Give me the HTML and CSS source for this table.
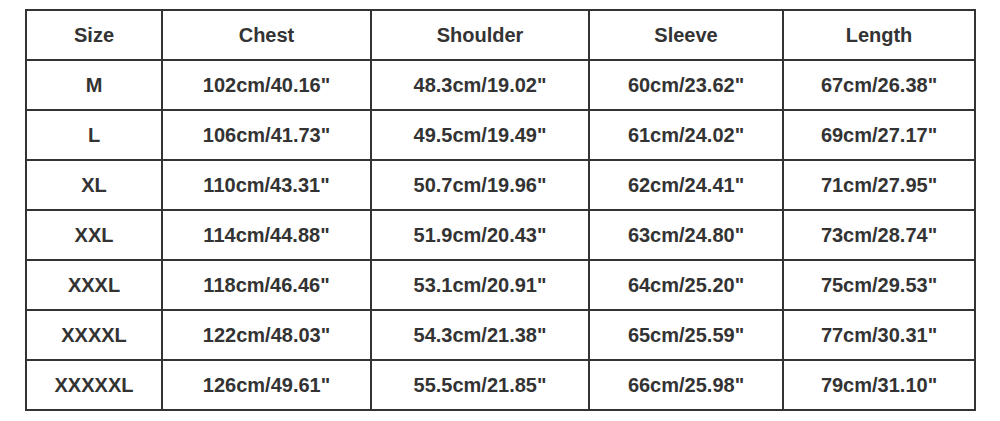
FILE: index.html
```html
<!DOCTYPE html>
<html>
<head>
<meta charset="utf-8">
<link rel="stylesheet" href="styles.css">
</head>
<body>
<table class="size-table">
<colgroup>
<col class="c1"><col class="c2"><col class="c3"><col class="c4"><col class="c5">
</colgroup>
<thead>
<tr><th>Size</th><th>Chest</th><th>Shoulder</th><th>Sleeve</th><th>Length</th></tr>
</thead>
<tbody>
<tr><td>M</td><td>102cm/40.16"</td><td>48.3cm/19.02"</td><td>60cm/23.62"</td><td>67cm/26.38"</td></tr>
<tr><td>L</td><td>106cm/41.73"</td><td>49.5cm/19.49"</td><td>61cm/24.02"</td><td>69cm/27.17"</td></tr>
<tr><td>XL</td><td>110cm/43.31"</td><td>50.7cm/19.96"</td><td>62cm/24.41"</td><td>71cm/27.95"</td></tr>
<tr><td>XXL</td><td>114cm/44.88"</td><td>51.9cm/20.43"</td><td>63cm/24.80"</td><td>73cm/28.74"</td></tr>
<tr><td>XXXL</td><td>118cm/46.46"</td><td>53.1cm/20.91"</td><td>64cm/25.20"</td><td>75cm/29.53"</td></tr>
<tr><td>XXXXL</td><td>122cm/48.03"</td><td>54.3cm/21.38"</td><td>65cm/25.59"</td><td>77cm/30.31"</td></tr>
<tr><td>XXXXXL</td><td>126cm/49.61"</td><td>55.5cm/21.85"</td><td>66cm/25.98"</td><td>79cm/31.10"</td></tr>
</tbody>
</table>
</body>
</html>
```
FILE: styles.css
```css
html, body {
  margin: 0;
  padding: 0;
  background: #ffffff;
}
body {
  padding: 9px 0 0 25px;
  font-family: "Liberation Sans", Arial, sans-serif;
}
.size-table {
  border-collapse: collapse;
  table-layout: fixed;
  width: 949px;
  color: #333333;
}
.c1 { width: 136px; }
.c2 { width: 209px; }
.c3 { width: 218px; }
.c4 { width: 194px; }
.c5 { width: 192px; }
.size-table th,
.size-table td {
  border: 2px solid #333333;
  height: 48px;
  padding: 0;
  text-align: center;
  vertical-align: middle;
  font-size: 20px;
  font-weight: bold;
  line-height: 1;
}
```
